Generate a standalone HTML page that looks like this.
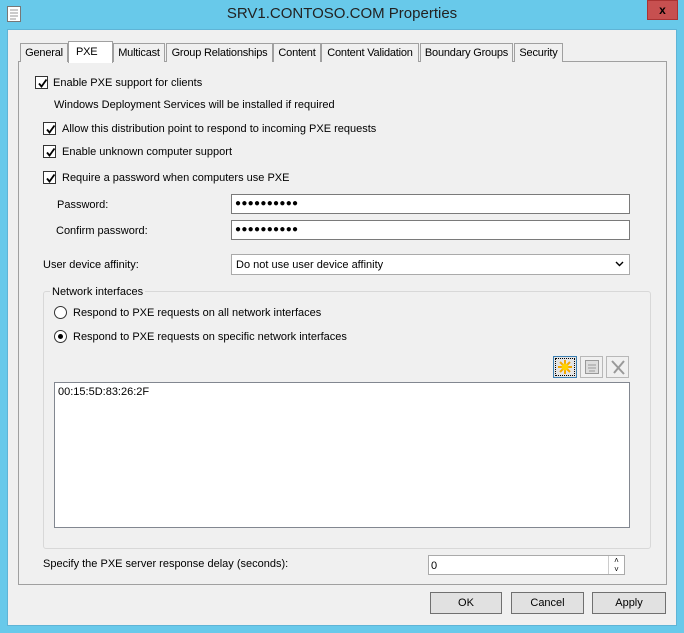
<!DOCTYPE html>
<html><head><style>
*{box-sizing:border-box;margin:0;padding:0}
body{width:684px;height:633px;background:#68c9ea;font-family:"Liberation Sans",sans-serif;font-size:11px;color:#000;position:relative;overflow:hidden}
.a{position:absolute;white-space:nowrap;line-height:17px}
.client{position:absolute;left:7px;top:29px;width:670px;height:597px;background:#f0f0f0;border:1px solid #5fb4d6}
.tab{position:absolute;top:43px;height:19px;border:1px solid #a0a0a0;border-bottom:none;background:#f0f0f0;text-align:center;line-height:19px;letter-spacing:-0.2px}
.panel{position:absolute;left:18px;top:61px;width:649px;height:524px;border:1px solid #a0a0a0;background:#f0f0f0}
.cb{position:absolute;width:13px;height:13px;border:1px solid #333;background:#fff}
.cb svg{position:absolute;left:1px;top:1px}
.inp{position:absolute;background:#fff;border:1px solid #7a7a7a}
.rb{position:absolute;width:13px;height:13px;border:1px solid #333;border-radius:50%;background:#fff}
.btn{position:absolute;top:592px;height:22px;border:1px solid #707070;background:#e1e1e1;text-align:center;line-height:21px}
.dots{font-size:10px;line-height:18px;padding-left:3px;letter-spacing:0.3px}
</style></head><body>
<svg class="a" style="left:6px;top:5px" width="16" height="18"><rect x="1.5" y="1.5" width="13" height="15" fill="#fff" stroke="#777"/><path d="M4 5h8M4 8h8M4 11h8M4 14h6" stroke="#999"/></svg>
<div class="a" style="left:0;width:684px;top:5px;text-align:center;font-size:15px;color:#222">SRV1.CONTOSO.COM Properties</div>
<div class="a" style="left:647px;top:0;width:31px;height:20px;background:#c75050;border:1px solid #a33;text-align:center;color:#000;font-weight:bold;font-size:12px;line-height:18px">x</div>
<div class="client"></div>
<div class="panel"></div>
<div class="tab" style="left:20px;width:48px">General</div>
<div class="tab" style="left:113px;width:52px">Multicast</div>
<div class="tab" style="left:166px;width:107px">Group Relationships</div>
<div class="tab" style="left:273px;width:48px">Content</div>
<div class="tab" style="left:321px;width:98px">Content Validation</div>
<div class="tab" style="left:420px;width:93px">Boundary Groups</div>
<div class="tab" style="left:514px;width:49px">Security</div>
<div class="tab" style="left:68px;top:41px;width:45px;height:22px;background:#fff;line-height:20px;text-align:left;padding-left:7px">PXE</div>

<div class="cb" style="left:35px;top:76px"><svg width="11" height="11"><path d="M2 5.5l2.5 3L9.5 1.5" stroke="#000" stroke-width="1.8" fill="none"/></svg></div>
<div class="a" style="left:53px;top:75px">Enable PXE support for clients</div>
<div class="a" style="left:54px;top:97px">Windows Deployment Services will be installed if required</div>
<div class="cb" style="left:43px;top:122px"><svg width="11" height="11"><path d="M2 5.5l2.5 3L9.5 1.5" stroke="#000" stroke-width="1.8" fill="none"/></svg></div>
<div class="a" style="left:62px;top:121px">Allow this distribution point to respond to incoming PXE requests</div>
<div class="cb" style="left:43px;top:145px"><svg width="11" height="11"><path d="M2 5.5l2.5 3L9.5 1.5" stroke="#000" stroke-width="1.8" fill="none"/></svg></div>
<div class="a" style="left:62px;top:144px">Enable unknown computer support</div>
<div class="cb" style="left:43px;top:171px"><svg width="11" height="11"><path d="M2 5.5l2.5 3L9.5 1.5" stroke="#000" stroke-width="1.8" fill="none"/></svg></div>
<div class="a" style="left:62px;top:170px">Require a password when computers use PXE</div>

<div class="a" style="left:57px;top:197px">Password:</div>
<div class="inp dots" style="left:231px;top:194px;width:399px;height:20px">●●●●●●●●●●</div>
<div class="a" style="left:56px;top:223px">Confirm password:</div>
<div class="inp dots" style="left:231px;top:220px;width:399px;height:20px">●●●●●●●●●●</div>
<div class="a" style="left:43px;top:257px">User device affinity:</div>
<div class="inp" style="left:231px;top:254px;width:399px;height:21px;border-color:#aaa;padding:2px 4px;line-height:16px">Do not use user device affinity</div>
<svg class="a" style="left:615px;top:261px" width="9" height="6"><path d="M1 1l3.5 3.5L8 1" stroke="#000" stroke-width="1.4" fill="none"/></svg>

<div class="a" style="left:43px;top:291px;width:608px;height:258px;border:1px solid #d8d8d8;border-radius:3px"></div>
<div class="a" style="left:50px;top:284px;background:#f0f0f0;padding:0 2px">Network interfaces</div>
<div class="rb" style="left:54px;top:306px"></div>
<div class="a" style="left:73px;top:305px">Respond to PXE requests on all network interfaces</div>
<div class="rb" style="left:54px;top:330px"><div style="position:absolute;left:3px;top:3px;width:5px;height:5px;border-radius:50%;background:#000"></div></div>
<div class="a" style="left:73px;top:329px">Respond to PXE requests on specific network interfaces</div>

<div class="a" style="left:553px;top:356px;width:24px;height:22px;border:1px solid #3c7fb1;background:#e5e5e5"><div style="position:absolute;left:1px;top:1px;right:1px;bottom:1px;border:1px dotted #000"></div>
<svg style="position:absolute;left:3px;top:2px" width="16" height="16"><path d="M8 1v14M1 8h14M3 3l10 10M13 3L3 13" stroke="#f4a800" stroke-width="2"/><circle cx="8" cy="8" r="3.5" fill="#ffd200"/></svg></div>
<div class="a" style="left:580px;top:356px;width:23px;height:22px;border:1px solid #b8b8b8"><svg style="position:absolute;left:3px;top:2px" width="16" height="16"><rect x="1.5" y="1.5" width="13" height="13" fill="#ddd" stroke="#999"/><path d="M4 6h8M4 9h8M5 12h6" stroke="#999"/></svg></div>
<div class="a" style="left:606px;top:356px;width:23px;height:22px;border:1px solid #b8b8b8"><svg style="position:absolute;left:3px;top:2px" width="16" height="16"><path d="M2 2l12 13M14 2L4 14" stroke="#999" stroke-width="2"/></svg></div>

<div class="inp" style="left:54px;top:382px;width:576px;height:146px;border-color:#828790;padding:3px 3px">00:15:5D:83:26:2F</div>

<div class="a" style="left:43px;top:556px">Specify the PXE server response delay (seconds):</div>
<div class="inp" style="left:428px;top:555px;width:197px;height:20px;border-color:#aaa;padding:2px 2px;line-height:16px">0</div>
<div class="a" style="left:608px;top:556px;width:16px;height:18px;border-left:1px solid #ccc;font-size:8px;text-align:center;line-height:9px">˄<br>˅</div>

<div class="btn" style="left:430px;width:72px">OK</div>
<div class="btn" style="left:511px;width:73px">Cancel</div>
<div class="btn" style="left:592px;width:74px">Apply</div>
</body></html>
